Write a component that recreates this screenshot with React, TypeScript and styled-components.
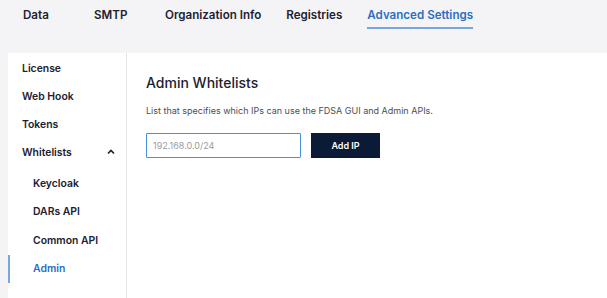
import styled, { createGlobalStyle } from "styled-components";

const GlobalStyle = createGlobalStyle`
  html, body {
    margin: 0;
    padding: 0;
    background: #f4f4f6;
    font-family: Inter, "Noto Sans", sans-serif;
    color: #1d2130;
  }
`;

const Page = styled.div`
  width: 607px;
  height: 298px;
  display: flex;
  flex-direction: column;
  overflow: hidden;
`;

const TabBar = styled.div`
  display: flex;
  padding: 7px 0 0 23px;
  height: 53px;
  flex-shrink: 0;
  box-sizing: border-box;
`;

const Tab = styled.div<{ active?: boolean }>`
  min-width: 46px;
  margin-right: 25px;
  align-self: flex-start;
  font-size: 11.6px;
  font-weight: 600;
  line-height: 16px;
  color: ${(p) => (p.active ? "#2c6ec4" : "#1d2130")};
  & > span {
    display: inline-block;
    padding-bottom: 4px;
    border-bottom: 2px solid ${(p) => (p.active ? "#7aa6dc" : "transparent")};
  }
`;

const Panel = styled.div`
  flex: 1;
  margin-left: 8px;
  background: #ffffff;
  display: flex;
`;

const Sidebar = styled.div`
  width: 119px;
  border-right: 1px solid #e4e4e8;
  padding-top: 1px;
  box-sizing: border-box;
`;

const NavItem = styled.div<{ sub?: boolean; active?: boolean }>`
  height: ${(p) => (p.sub ? "28.5px" : "28px")};
  display: flex;
  align-items: center;
  justify-content: space-between;
  box-sizing: border-box;
  padding-left: ${(p) => (p.sub ? "23px" : "12px")};
  padding-right: 11px;
  border-left: 2px solid ${(p) => (p.active ? "#7aa6dc" : "transparent")};
  font-size: 10.4px;
  font-weight: 600;
  color: ${(p) => (p.active ? "#2c6ec4" : "#1d2130")};
`;

const SubList = styled.div`
  padding-top: 3px;
`;

const Content = styled.div`
  flex: 1;
  padding: 20px 0 0 19px;
`;

const Title = styled.h2`
  margin: 0;
  font-size: 14px;
  line-height: 20px;
  font-weight: 500;
  color: #1d2130;
`;

const Description = styled.p`
  margin: 12px 0 0;
  font-size: 9px;
  line-height: 12px;
  color: #4a4d57;
`;

const FormRow = styled.div`
  display: flex;
  gap: 10px;
  margin-top: 16px;
`;

const IpInput = styled.input`
  width: 155px;
  height: 25px;
  box-sizing: border-box;
  border: 1.5px solid #4a8fdc;
  border-radius: 1px;
  padding: 0 6px;
  font-family: Inter, "Noto Sans", sans-serif;
  font-size: 9px;
  color: #1d2130;
  outline: none;
  &::placeholder {
    color: #9a9ca3;
  }
`;

const AddButton = styled.button`
  width: 69px;
  height: 25px;
  border: none;
  background: #0b1a36;
  color: #ffffff;
  font-family: Inter, "Noto Sans", sans-serif;
  font-size: 9px;
  font-weight: 600;
  cursor: pointer;
`;

const ChevronUp = () => (
  <svg width="8" height="6" viewBox="0 0 8 6">
    <path d="M1 4.5 L4 1.5 L7 4.5" fill="none" stroke="#1d2130" strokeWidth="1.6" />
  </svg>
);

const tabs = ["Data", "SMTP", "Organization Info", "Registries", "Advanced Settings"];

export default function App() {
  return (
    <Page>
      <GlobalStyle />
      <TabBar>
        {tabs.map((t) => (
          <Tab key={t} active={t === "Advanced Settings"}>
            <span>{t}</span>
          </Tab>
        ))}
      </TabBar>
      <Panel>
        <Sidebar>
          <NavItem>License</NavItem>
          <NavItem>Web Hook</NavItem>
          <NavItem>Tokens</NavItem>
          <NavItem>
            Whitelists
            <ChevronUp />
          </NavItem>
          <SubList>
            <NavItem sub>Keycloak</NavItem>
            <NavItem sub>DARs API</NavItem>
            <NavItem sub>Common API</NavItem>
            <NavItem sub active>
              Admin
            </NavItem>
          </SubList>
        </Sidebar>
        <Content>
          <Title>Admin Whitelists</Title>
          <Description>List that specifies which IPs can use the FDSA GUI and Admin APIs.</Description>
          <FormRow>
            <IpInput placeholder="192.168.0.0/24" />
            <AddButton>Add IP</AddButton>
          </FormRow>
        </Content>
      </Panel>
    </Page>
  );
}
